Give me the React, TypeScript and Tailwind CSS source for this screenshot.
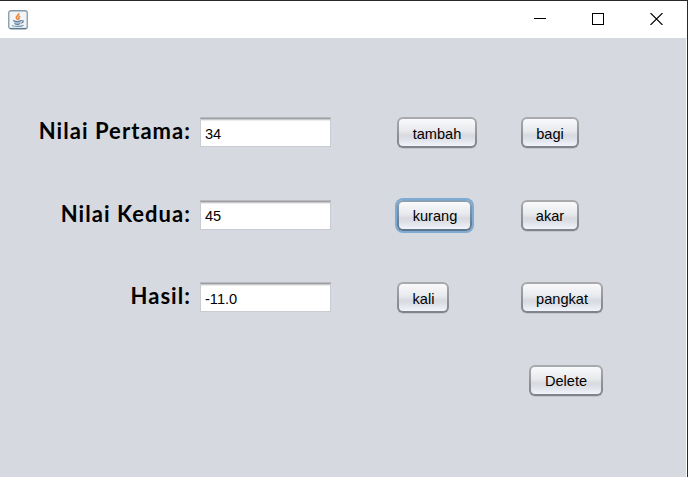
const raised =
  'h-[31px] shrink-0 rounded-[6px] bg-gradient-to-b from-[#a9abaf] to-[#7f8288] p-[2px] shadow-[0_1px_0_#c3c7cf]';
const focused =
  'h-[31px] shrink-0 rounded-[6px] bg-gradient-to-b from-[#8aa2b8] to-[#5d7488] p-[2px] shadow-[0_0_0_2px_#7eabd4]';

function SwingButton({ label, width, nudge = '', focus = false }: { label: string; width: string; nudge?: string; focus?: boolean }) {
  return (
    <button className={`${focus ? focused : raised} ${width}`}>
      <span className={`flex h-full w-full items-center justify-center rounded-[4px] bg-[linear-gradient(#fafafc_0%,#e7e9ed_45%,#d8dae0_60%,#dcdfe6_72%,#f1f4fb_100%)] pt-[3px] leading-none ${nudge}`}>
        {label}
      </span>
    </button>
  );
}

function Field({ value }: { value: string }) {
  return (
    <input
      readOnly
      value={value}
      className="mt-px ml-[10px] h-[29px] w-[131px] shrink-0 border border-[#c8cbd0] border-t-[#9c9ea2] bg-white pt-[2px] pl-[4px] shadow-[inset_0_1px_0_#c9cacc,inset_0_2px_0_#ececee,0_-1px_0_#b9bbc0] outline-none"
    />
  );
}

function Label({ text }: { text: string }) {
  return (
    <label className="w-[191px] shrink-0 text-right font-['Lato',sans-serif] text-[22px] leading-[28px] font-bold tracking-[1.05px] whitespace-nowrap">
      {text}
    </label>
  );
}

function JavaIcon() {
  return (
    <svg width="20" height="20" viewBox="0 0 20 20" fill="none">
      <rect x="0.75" y="0.75" width="18.5" height="18" rx="2" fill="#f2f4f6" stroke="#8399ab" strokeWidth="1.3" />
      <path d="M2 18.5h16" stroke="#5a7890" strokeWidth="1.2" />
      <path d="M10.6 3.2c1 2-3 2.8-2.2 4.8.3.8 1 1.1 1.4 2M12.2 6c-2.4 1-.8 2.1-1.6 3.6" stroke="#e9873b" strokeWidth="1.7" />
      <path d="M5.2 10.3c2 .9 6 .9 8 0l-.9 3.3c-1.4 1-4.4 1-5.8 0z" fill="#a9bccb" />
      <path d="M5.2 10.6c2 .9 6 .9 8 0M6.4 13.6c1.6 1 4.2 1 5.8 0M13.2 10.8c3.3-.7 2.4 1.9-.3 2.4" stroke="#587b9b" strokeWidth="1.1" />
      <path d="M4 15.2c1 1.6 9.5 1.6 11.5 0" stroke="#7897b0" strokeWidth="1.1" />
    </svg>
  );
}

export default function App() {
  return (
    <div className="flex h-[477px] w-[688px] flex-col overflow-hidden border-t border-r border-[#29292c] bg-white font-['Liberation_Sans',Arial,sans-serif] text-[14.6px] text-black">
      <header className="flex h-[37px] shrink-0 items-center justify-between pr-[24px] pl-[8px]">
        <JavaIcon />
        <div className="flex items-center gap-[46px] pb-[2px]">
          <svg width="12" height="12" shapeRendering="crispEdges">
            <path d="M0 5.5h12" stroke="black" />
          </svg>
          <svg width="12" height="12" shapeRendering="crispEdges">
            <rect x="0.5" y="0.5" width="11" height="11" fill="none" stroke="black" />
          </svg>
          <svg width="13" height="12">
            <path d="M.5 0l12 12M12.5 0l-12 12" stroke="black" strokeWidth="1.1" />
          </svg>
        </div>
      </header>
      <main className="mr-px flex grow flex-col gap-[51.5px] bg-[#d6d9e0] pt-[79px]">
        <div className="flex h-[31px] shrink-0 items-start">
          <Label text="Nilai Pertama:" />
          <div className="-ml-px flex w-[207px] shrink-0">
            <Field value="34" />
          </div>
          <div className="flex w-[124px] shrink-0">
            <SwingButton label="tambah" width="w-[80px]" />
          </div>
          <SwingButton label="bagi" width="w-[58px]" />
        </div>
        <div className="flex h-[31px] shrink-0 items-start">
          <Label text="Nilai Kedua:" />
          <div className="-ml-px flex w-[207px] shrink-0">
            <Field value="45" />
          </div>
          <div className="flex w-[124px] shrink-0">
            <SwingButton label="kurang" width="w-[75px]" nudge="pl-px" focus />
          </div>
          <SwingButton label="akar" width="w-[58px]" />
        </div>
        <div className="flex h-[31px] shrink-0 items-start">
          <Label text="Hasil:" />
          <div className="-ml-px flex w-[207px] shrink-0">
            <Field value="-11.0" />
          </div>
          <div className="flex w-[124px] shrink-0">
            <SwingButton label="kali" width="w-[52px]" nudge="pl-px" />
          </div>
          <SwingButton label="pangkat" width="w-[82px]" />
        </div>
        <div className="flex h-[31px] shrink-0 justify-end pr-[83px]">
          <SwingButton label="Delete" width="w-[74px]" />
        </div>
      </main>
    </div>
  );
}
